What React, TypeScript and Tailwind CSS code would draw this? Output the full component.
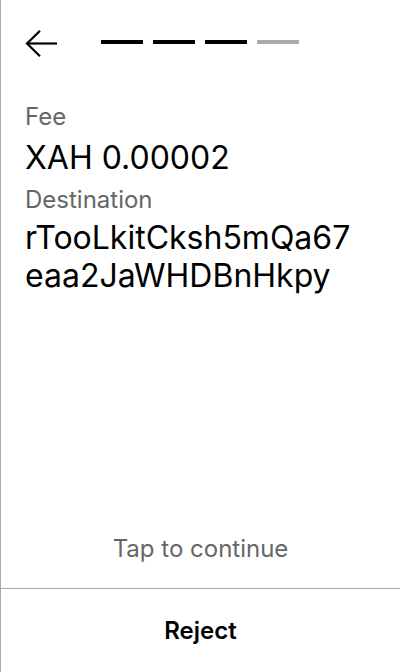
export default function App() {
  const steps = [true, true, true, false];

  return (
    <div
      className="flex h-[672px] w-[400px] flex-col border-l border-[#aaaaaa] bg-white text-black"
      style={{ fontFamily: "Inter, 'Noto Sans', sans-serif" }}
    >
      <div className="flex items-start px-6 pt-[30px]">
        <button className="h-[27px] w-[32px]" aria-label="Back">
          <svg width="32" height="27" viewBox="0 0 32 27" fill="none" stroke="black" strokeWidth="2.2">
            <path d="M32 13.5H2" />
            <path d="M15 0.8 2 13.5 15 26.2" />
          </svg>
        </button>
        <div className="ml-[44px] mt-[10px] flex gap-[10px]">
          {steps.map((done, i) => (
            <div key={i} className={`h-1 w-[42px] ${done ? "bg-black" : "bg-[#aaaaaa]"}`} />
          ))}
        </div>
      </div>

      <div className="flex flex-1 flex-col px-6 pt-[44px]">
        <div className="text-[24px] leading-8 text-[#666666]">Fee</div>
        <div className="mt-[6px] text-[32px] leading-[38px]">XAH 0.00002</div>
        <div className="mt-[7px] text-[24px] leading-8 text-[#666666]">Destination</div>
        <div className="mt-[3px] break-all pr-4 text-[32px] leading-[38px]">
          rTooLkitCksh5mQa67eaa2JaWHDBnHkpy
        </div>
        <div className="mt-auto pb-[23px] text-center text-[24px] leading-8 text-[#666666]">
          Tap to continue
        </div>
      </div>

      <button className="h-[84px] border-t border-[#aaaaaa] text-[24px] font-semibold">Reject</button>
    </div>
  );
}
